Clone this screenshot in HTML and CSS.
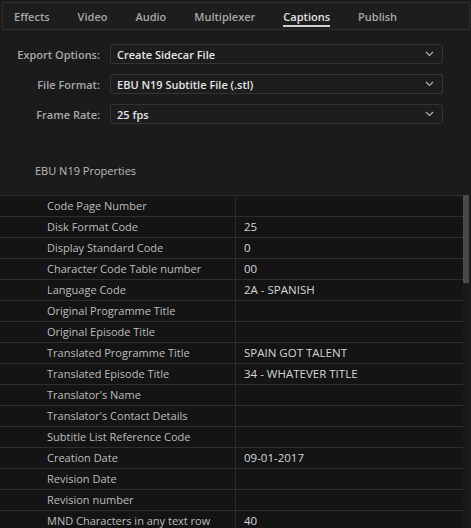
FILE: index.html
```html
<!DOCTYPE html>
<html>
<head>
<meta charset="utf-8">
<link rel="stylesheet" href="styles.css">
</head>
<body>
<div class="tabs">
  <span class="tab">Effects</span>
  <span class="tab">Video</span>
  <span class="tab">Audio</span>
  <span class="tab">Multiplexer</span>
  <span class="tab active">Captions</span>
  <span class="tab">Publish</span>
</div>
<div class="form">
  <div class="row">
    <label class="label">Export Options:</label>
    <div class="select"><span>Create Sidecar File</span><svg class="chev" width="9" height="6" viewBox="0 0 9 6"><path d="M1 1 L4.5 4.5 L8 1" fill="none" stroke="#b0b0b0" stroke-width="1.2"/></svg></div>
  </div>
  <div class="row">
    <label class="label">File Format:</label>
    <div class="select"><span>EBU N19 Subtitle File (.stl)</span><svg class="chev" width="9" height="6" viewBox="0 0 9 6"><path d="M1 1 L4.5 4.5 L8 1" fill="none" stroke="#b0b0b0" stroke-width="1.2"/></svg></div>
  </div>
  <div class="row">
    <label class="label">Frame Rate:</label>
    <div class="select"><span>25 fps</span><svg class="chev" width="9" height="6" viewBox="0 0 9 6"><path d="M1 1 L4.5 4.5 L8 1" fill="none" stroke="#b0b0b0" stroke-width="1.2"/></svg></div>
  </div>
</div>
<div class="section-title">EBU N19 Properties</div>
<div class="props">
  <div class="table">
    <div class="prow"><span class="k">Code Page Number</span><span class="v"></span></div>
    <div class="prow"><span class="k">Disk Format Code</span><span class="v">25</span></div>
    <div class="prow"><span class="k">Display Standard Code</span><span class="v">0</span></div>
    <div class="prow"><span class="k">Character Code Table number</span><span class="v">00</span></div>
    <div class="prow"><span class="k">Language Code</span><span class="v">2A - SPANISH</span></div>
    <div class="prow"><span class="k">Original Programme Title</span><span class="v"></span></div>
    <div class="prow"><span class="k">Original Episode Title</span><span class="v"></span></div>
    <div class="prow"><span class="k">Translated Programme Title</span><span class="v">SPAIN GOT TALENT</span></div>
    <div class="prow"><span class="k">Translated Episode Title</span><span class="v">34 - WHATEVER TITLE</span></div>
    <div class="prow"><span class="k">Translator's Name</span><span class="v"></span></div>
    <div class="prow"><span class="k">Translator's Contact Details</span><span class="v"></span></div>
    <div class="prow"><span class="k">Subtitle List Reference Code</span><span class="v"></span></div>
    <div class="prow"><span class="k">Creation Date</span><span class="v">09-01-2017</span></div>
    <div class="prow"><span class="k">Revision Date</span><span class="v"></span></div>
    <div class="prow"><span class="k">Revision number</span><span class="v"></span></div>
    <div class="prow"><span class="k">MND Characters in any text row</span><span class="v">40</span></div>
  </div>
  <div class="scrollbar"><div class="thumb"></div></div>
</div>
</body>
</html>
```
FILE: styles.css
```css
html, body {
  margin: 0;
  padding: 0;
  background: #1b1b1b;
  height: 100%;
  overflow: hidden;
}
body {
  font-family: "Open Sans", "Noto Sans", sans-serif;
  font-size: 11px;
  color: #c4c4c4;
}
.tabs {
  margin: 2px 1px 0 2px;
  height: 26px;
  border: 1px solid #2e2e2e;
  background: #1d1d1d;
  display: flex;
  align-items: stretch;
  padding-left: 11px;
  gap: 28px;
  box-sizing: content-box;
}
.tab {
  font-size: 11px;
  font-weight: 600;
  color: #a8a8a8;
  display: flex;
  align-items: center;
  padding-top: 1px;
  position: relative;
}
.tab.active {
  color: #e2e2e2;
}
.tab.active::after {
  content: "";
  position: absolute;
  left: 0;
  right: 0;
  bottom: 2px;
  height: 2px;
  background: #d0d0d0;
}
.form {
  margin-top: 14px;
  display: flex;
  flex-direction: column;
  gap: 10px;
}
.row {
  display: flex;
  align-items: center;
  height: 20px;
}
.label {
  width: 100px;
  padding-right: 10px;
  text-align: right;
  font-size: 11px;
  font-weight: 600;
  color: #a8a8a8;
  white-space: nowrap;
}
.select {
  width: 333px;
  height: 20px;
  box-sizing: border-box;
  border: 1px solid #333;
  border-radius: 2px;
  background: #1d1d1d;
  display: flex;
  align-items: center;
  justify-content: space-between;
  padding: 0 8px 0 6px;
  font-size: 11px;
  font-weight: 600;
  color: #e4e4e4;
}
.chev {
  display: block;
}
.section-title {
  margin: 37px 0 0 35px;
  height: 20px;
  line-height: 20px;
  font-size: 11px;
  font-weight: 500;
  color: #bdbdbd;
}
.props {
  margin-top: 14px;
  display: flex;
  align-items: flex-start;
}
.table {
  width: 463px;
  border-top: 1px solid #2e2e2e;
}
.prow {
  display: grid;
  grid-template-columns: 236px 1fr;
  height: 20px;
  border-bottom: 1px solid #2e2e2e;
  background: #141414;
}
.k, .v {
  font-size: 11px;
  font-weight: 500;
  line-height: 20px;
  white-space: nowrap;
  overflow: hidden;
}
.k {
  padding-left: 47px;
  color: #bdbdbd;
  border-right: 1px solid #2a2a2a;
}
.v {
  padding-left: 8px;
  font-size: 11.5px;
  color: #d6d6d6;
}
.scrollbar {
  width: 6px;
  height: 340px;
  background: #191919;
}
.thumb {
  height: 88px;
  background: #4a4a4a;
}
```
